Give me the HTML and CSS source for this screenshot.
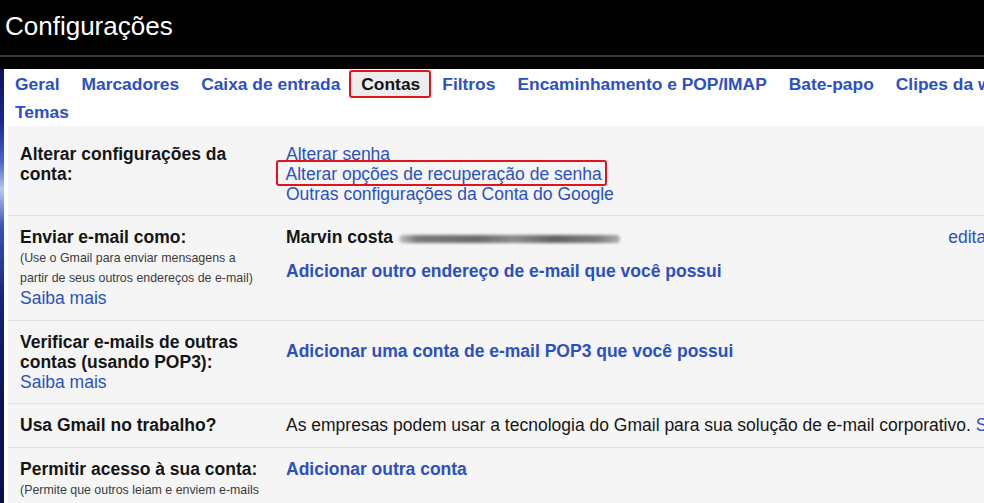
FILE: index.html
```html
<!DOCTYPE html>
<html lang="pt-BR">
<head>
<meta charset="utf-8">
<title>Configurações</title>
<link rel="stylesheet" href="styles.css">
</head>
<body>
<div class="app">
  <header class="topbar">
    <h1 class="title">Configurações</h1>
  </header>
  <div class="main">
    <div class="edge"></div>
    <div class="panel">
      <nav class="tabs">
        <div class="tabrow">
          <a class="tab">Geral</a>
          <a class="tab">Marcadores</a>
          <a class="tab">Caixa de entrada</a>
          <a class="tab active">Contas</a>
          <a class="tab">Filtros</a>
          <a class="tab">Encaminhamento e POP/IMAP</a>
          <a class="tab">Bate-papo</a>
          <a class="tab">Clipes da web</a>
        </div>
        <div class="tabrow">
          <a class="tab">Temas</a>
        </div>
      </nav>
      <div class="content">
        <div class="row row-first">
          <div class="label"><b>Alterar configurações da conta:</b></div>
          <div class="value">
            <a class="link">Alterar senha</a><br>
            <span class="mark"><a class="link">Alterar opções de recuperação de senha</a></span><br>
            <a class="link">Outras configurações da Conta do Google</a>
          </div>
        </div>
        <div class="row">
          <div class="label">
            <b>Enviar e-mail como:</b>
            <div class="small">(Use o Gmail para enviar mensagens a<br>partir de seus outros endereços de e-mail)</div>
            <a class="link">Saiba mais</a>
          </div>
          <div class="value">
            <div class="sender">
              <b>Marvin costa</b>
              <span class="blur"></span>
              <a class="link edit">editar</a>
            </div>
            <a class="link strong add-sender">Adicionar outro endereço de e-mail que você possui</a>
          </div>
        </div>
        <div class="row">
          <div class="label">
            <b>Verificar e-mails de outras contas (usando POP3):</b><br>
            <a class="link">Saiba mais</a>
          </div>
          <div class="value">
            <a class="link strong add-pop">Adicionar uma conta de e-mail POP3 que você possui</a>
          </div>
        </div>
        <div class="row">
          <div class="label"><b>Usa Gmail no trabalho?</b></div>
          <div class="value nowrap">As empresas podem usar a tecnologia do Gmail para sua solução de e-mail corporativo. <a class="link">Saiba mais</a></div>
        </div>
        <div class="row">
          <div class="label">
            <b>Permitir acesso à sua conta:</b>
            <div class="small">(Permite que outros leiam e enviem e-mails<br>em seu nome)</div>
          </div>
          <div class="value">
            <a class="link strong">Adicionar outra conta</a>
          </div>
        </div>
      </div>
    </div>
  </div>
</div>
</body>
</html>
```

FILE: styles.css
```css
html, body {
  margin: 0;
  padding: 0;
  background: #000;
  width: 984px;
  height: 503px;
  overflow: hidden;
}

body {
  font-family: "Liberation Sans", Arial, Helvetica, sans-serif;
}

.app {
  width: 1004px;
}

.topbar {
  background: #000;
  padding-bottom: 12px;
}

.title {
  margin: 0;
  height: 57px;
  box-sizing: border-box;
  padding: 11px 0 0 5px;
  font-size: 26px;
  line-height: 30px;
  font-weight: normal;
  color: #fff;
  border-bottom: 2px solid #3a3a3a;
}

.main {
  display: flex;
}

.edge {
  flex: none;
  width: 4px;
  background: linear-gradient(180deg, #0b1058 0%, #1b2c96 12%, #4b66c8 20%, #b9c8ee 26%, #3b54b8 34%, #15227a 50%, #0c1456 70%, #0a0f44 100%);
}

.panel {
  flex: 1;
  min-width: 0;
  background: #fff;
}

.tabs {
  padding-top: 1px;
}

.tabrow {
  display: flex;
  white-space: nowrap;
}

.tab {
  display: block;
  flex: none;
  font-size: 17.4px;
  font-weight: bold;
  line-height: 24px;
  padding: 0 9px;
  border: 2px solid transparent;
  color: #2b50c2;
  text-decoration: none;
}

.tab.active {
  color: #151515;
  background: #ececec;
  border-color: #e3131c;
  border-radius: 3px;
  padding: 0 9px 0 10px;
  margin-left: -2px;
}

.content {
  margin-left: 4px;
  background: #f5f5f5;
}

.row {
  display: grid;
  grid-template-columns: 266px minmax(0, 1fr);
  padding: 11px 12px 11.5px 12px;
  border-bottom: 1px solid #e1e1e1;
  font-size: 17.5px;
  line-height: 20px;
  color: #151515;
}

.row-first {
  padding-top: 17.5px;
}

.label {
  width: 250px;
}

.label b,
.value b {
  font-weight: bold;
}

.small {
  margin-top: 1px;
  font-size: 12.4px;
  line-height: 20px;
  color: #3c3c3c;
  white-space: nowrap;
}

.link {
  color: #2b50c2;
  text-decoration: none;
}

.link.strong {
  font-weight: bold;
}

.mark {
  border: 2.5px solid #e3131c;
  border-radius: 3px;
  padding: 2px 3px 0 8px;
  margin: 0 -5.5px 0 -10.5px;
}

.sender {
  display: flex;
  align-items: baseline;
  white-space: nowrap;
}

.blur {
  align-self: center;
  width: 221px;
  height: 8px;
  margin-left: 6px;
  margin-top: 3px;
  border-radius: 4px;
  background: linear-gradient(90deg, #c4c4c4 0%, #7a7a7a 8%, #6a6a6a 35%, #8c8c8c 52%, #626262 70%, #7c7c7c 90%, #b0b0b0 100%);
  filter: blur(1.4px);
}

.edit {
  margin-left: auto;
}

.add-sender {
  display: block;
  margin-top: 14px;
}

.add-pop {
  display: block;
  margin-top: 9px;
}

.nowrap {
  white-space: nowrap;
}
```
